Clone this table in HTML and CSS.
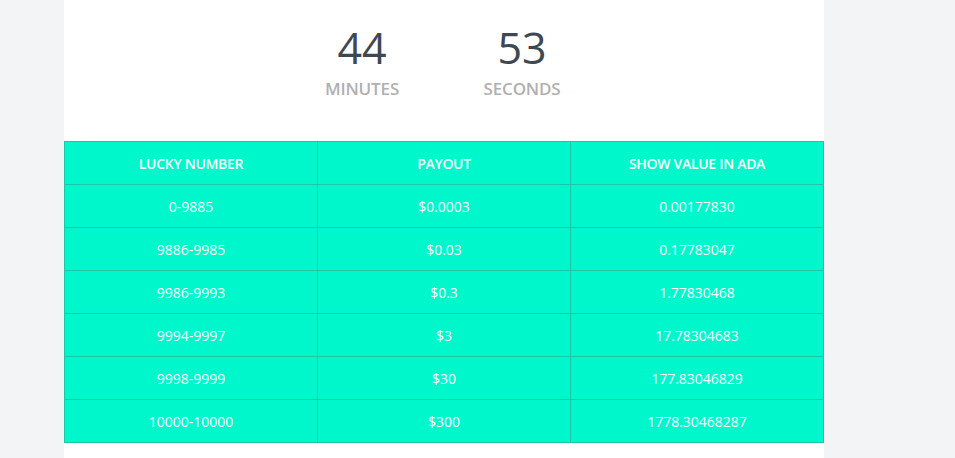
FILE: index.html
```html
<!DOCTYPE html>
<html>
<head>
<meta charset="utf-8">
<link rel="stylesheet" href="styles.css">
</head>
<body>
<div class="page">
  <div class="panel">
    <div class="countdown">
      <div class="unit"><div class="num">44</div><div class="label">MINUTES</div></div>
      <div class="unit"><div class="num">53</div><div class="label">SECONDS</div></div>
    </div>
    <table class="payout">
      <thead>
        <tr><th>LUCKY NUMBER</th><th>PAYOUT</th><th>SHOW VALUE IN ADA</th></tr>
      </thead>
      <tbody>
        <tr><td>0-9885</td><td>$0.0003</td><td>0.00177830</td></tr>
        <tr><td>9886-9985</td><td>$0.03</td><td>0.17783047</td></tr>
        <tr><td>9986-9993</td><td>$0.3</td><td>1.77830468</td></tr>
        <tr><td>9994-9997</td><td>$3</td><td>17.78304683</td></tr>
        <tr><td>9998-9999</td><td>$30</td><td>177.83046829</td></tr>
        <tr><td>10000-10000</td><td>$300</td><td>1778.30468287</td></tr>
      </tbody>
    </table>
  </div>
</div>
</body>
</html>
```
FILE: styles.css
```css
html, body {
  margin: 0;
  padding: 0;
  background: #f3f4f6;
  font-family: "Open Sans", "Liberation Sans", sans-serif;
}
.page {
  padding-left: 64px;
  height: 458px;
  overflow: hidden;
}
.panel {
  width: 760px;
  background: #fff;
  min-height: 458px;
}
.countdown {
  display: flex;
  justify-content: center;
  gap: 40px;
  padding-top: 22px;
  padding-right: 4px;
  height: 141px;
  box-sizing: border-box;
}
.unit {
  width: 120px;
  text-align: center;
}
.num {
  font-size: 43px;
  line-height: 52px;
  color: #3d4852;
}
.label {
  font-size: 17px;
  font-weight: 600;
  letter-spacing: -0.15px;
  line-height: 24px;
  color: #b0b0b0;
  margin-top: 3px;
}
.payout {
  width: 760px;
  border-collapse: collapse;
  background: #00f7cc;
  color: #fff;
  font-size: 14px;
  table-layout: fixed;
}
.payout th, .payout td {
  border: 1px solid #21c5a5;
  height: 42px;
  padding: 0;
  text-align: center;
}
.payout th {
  font-weight: 600;
  letter-spacing: -0.3px;
}
```
